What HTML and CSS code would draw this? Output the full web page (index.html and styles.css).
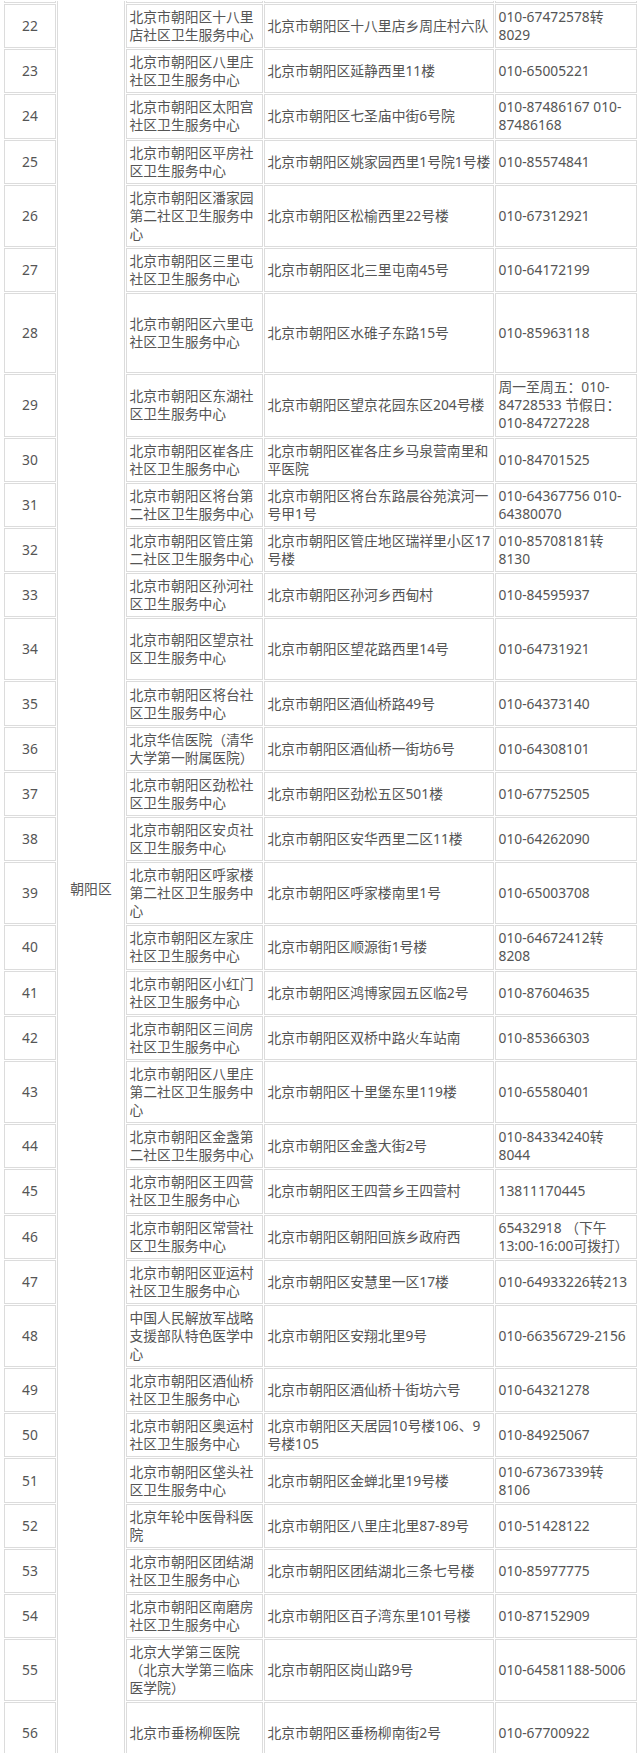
FILE: index.html
```html
<!DOCTYPE html>
<html lang="zh-CN">
<head>
<meta charset="utf-8">
<title>朝阳区社区卫生服务中心</title>
<link rel="stylesheet" href="styles.css">
</head>
<body>
<table class="list">
<colgroup>
<col class="c-no"><col class="c-dist"><col class="c-name"><col class="c-addr"><col class="c-tel">
</colgroup>
<tbody>
<tr class="edge-top"><td></td><td class="dist" rowspan="37">朝阳区</td><td></td><td></td><td></td></tr>
<tr><td class="no">22</td><td>北京市朝阳区十八里店社区卫生服务中心</td><td>北京市朝阳区十八里店乡周庄村六队</td><td>010-67472578转8029</td></tr>
<tr><td class="no">23</td><td>北京市朝阳区八里庄社区卫生服务中心</td><td>北京市朝阳区延静西里11楼</td><td>010-65005221</td></tr>
<tr><td class="no">24</td><td>北京市朝阳区太阳宫社区卫生服务中心</td><td>北京市朝阳区七圣庙中街6号院</td><td>010-87486167 010-<br>87486168</td></tr>
<tr><td class="no">25</td><td>北京市朝阳区平房社区卫生服务中心</td><td>北京市朝阳区姚家园西里1号院1号楼</td><td>010-85574841</td></tr>
<tr><td class="no">26</td><td>北京市朝阳区潘家园第二社区卫生服务中心</td><td>北京市朝阳区松榆西里22号楼</td><td>010-67312921</td></tr>
<tr><td class="no">27</td><td>北京市朝阳区三里屯社区卫生服务中心</td><td>北京市朝阳区北三里屯南45号</td><td>010-64172199</td></tr>
<tr class="r4"><td class="no">28</td><td>北京市朝阳区六里屯社区卫生服务中心</td><td>北京市朝阳区水碓子东路15号</td><td>010-85963118</td></tr>
<tr><td class="no">29</td><td>北京市朝阳区东湖社区卫生服务中心</td><td>北京市朝阳区望京花园东区204号楼</td><td>周一至周五：010-<br>84728533 节假日：<br>010-84727228</td></tr>
<tr><td class="no">30</td><td>北京市朝阳区崔各庄社区卫生服务中心</td><td>北京市朝阳区崔各庄乡马泉营南里和平医院</td><td>010-84701525</td></tr>
<tr><td class="no">31</td><td>北京市朝阳区将台第二社区卫生服务中心</td><td>北京市朝阳区将台东路晨谷苑滨河一号甲1号</td><td>010-64367756 010-<br>64380070</td></tr>
<tr><td class="no">32</td><td>北京市朝阳区管庄第二社区卫生服务中心</td><td>北京市朝阳区管庄地区瑞祥里小区17号楼</td><td>010-85708181转8130</td></tr>
<tr><td class="no">33</td><td>北京市朝阳区孙河社区卫生服务中心</td><td>北京市朝阳区孙河乡西甸村</td><td>010-84595937</td></tr>
<tr class="r3"><td class="no">34</td><td>北京市朝阳区望京社区卫生服务中心</td><td>北京市朝阳区望花路西里14号</td><td>010-64731921</td></tr>
<tr><td class="no">35</td><td>北京市朝阳区将台社区卫生服务中心</td><td>北京市朝阳区酒仙桥路49号</td><td>010-64373140</td></tr>
<tr><td class="no">36</td><td>北京华信医院（清华大学第一附属医院）</td><td>北京市朝阳区酒仙桥一街坊6号</td><td>010-64308101</td></tr>
<tr><td class="no">37</td><td>北京市朝阳区劲松社区卫生服务中心</td><td>北京市朝阳区劲松五区501楼</td><td>010-67752505</td></tr>
<tr><td class="no">38</td><td>北京市朝阳区安贞社区卫生服务中心</td><td>北京市朝阳区安华西里二区11楼</td><td>010-64262090</td></tr>
<tr><td class="no">39</td><td>北京市朝阳区呼家楼第二社区卫生服务中心</td><td>北京市朝阳区呼家楼南里1号</td><td>010-65003708</td></tr>
<tr><td class="no">40</td><td>北京市朝阳区左家庄社区卫生服务中心</td><td>北京市朝阳区顺源街1号楼</td><td>010-64672412转8208</td></tr>
<tr><td class="no">41</td><td>北京市朝阳区小红门社区卫生服务中心</td><td>北京市朝阳区鸿博家园五区临2号</td><td>010-87604635</td></tr>
<tr><td class="no">42</td><td>北京市朝阳区三间房社区卫生服务中心</td><td>北京市朝阳区双桥中路火车站南</td><td>010-85366303</td></tr>
<tr><td class="no">43</td><td>北京市朝阳区八里庄第二社区卫生服务中心</td><td>北京市朝阳区十里堡东里119楼</td><td>010-65580401</td></tr>
<tr><td class="no">44</td><td>北京市朝阳区金盏第二社区卫生服务中心</td><td>北京市朝阳区金盏大街2号</td><td>010-84334240转8044</td></tr>
<tr><td class="no">45</td><td>北京市朝阳区王四营社区卫生服务中心</td><td>北京市朝阳区王四营乡王四营村</td><td>13811170445</td></tr>
<tr><td class="no">46</td><td>北京市朝阳区常营社区卫生服务中心</td><td>北京市朝阳区朝阳回族乡政府西</td><td>65432918 （下午13:00-16:00可拨打）</td></tr>
<tr><td class="no">47</td><td>北京市朝阳区亚运村社区卫生服务中心</td><td>北京市朝阳区安慧里一区17楼</td><td>010-64933226转213</td></tr>
<tr><td class="no">48</td><td>中国人民解放军战略支援部队特色医学中心</td><td>北京市朝阳区安翔北里9号</td><td>010-66356729-2156</td></tr>
<tr><td class="no">49</td><td>北京市朝阳区酒仙桥社区卫生服务中心</td><td>北京市朝阳区酒仙桥十街坊六号</td><td>010-64321278</td></tr>
<tr><td class="no">50</td><td>北京市朝阳区奥运村社区卫生服务中心</td><td>北京市朝阳区天居园10号楼106、9号楼105</td><td>010-84925067</td></tr>
<tr><td class="no">51</td><td>北京市朝阳区垡头社区卫生服务中心</td><td>北京市朝阳区金蝉北里19号楼</td><td>010-67367339转8106</td></tr>
<tr><td class="no">52</td><td>北京年轮中医骨科医院</td><td>北京市朝阳区八里庄北里87-89号</td><td>010-51428122</td></tr>
<tr><td class="no">53</td><td>北京市朝阳区团结湖社区卫生服务中心</td><td>北京市朝阳区团结湖北三条七号楼</td><td>010-85977775</td></tr>
<tr><td class="no">54</td><td>北京市朝阳区南磨房社区卫生服务中心</td><td>北京市朝阳区百子湾东里101号楼</td><td>010-87152909</td></tr>
<tr><td class="no">55</td><td>北京大学第三医院（北京大学第三临床医学院）</td><td>北京市朝阳区岗山路9号</td><td>010-64581188-5006</td></tr>
<tr class="r3"><td class="no">56</td><td>北京市垂杨柳医院</td><td>北京市朝阳区垂杨柳南街2号</td><td>010-67700922</td></tr>
<tr class="edge-bottom"><td></td><td></td><td></td><td></td></tr>
</tbody>
</table>
</body>
</html>
```
FILE: styles.css
```css
html, body {
  margin: 0;
  padding: 0;
  background: #ffffff;
}

body {
  font-family: "Noto Sans", "Noto Sans CJK SC", sans-serif;
  font-size: 13.8px;
  line-height: 18px;
  color: #555555;
}

.list {
  table-layout: fixed;
  width: 635px;
  margin-left: 3px;
  border-collapse: separate;
  border-spacing: 1px;
}

.c-no { width: 52px; }
.c-dist { width: 68px; }
.c-name { width: 137px; }
.c-addr { width: 230px; }
.c-tel { width: 142px; }

.list td {
  box-sizing: border-box;
  border: 1px solid #dcdcdc;
  padding: 3.1px 2.5px;
  vertical-align: middle;
  text-align: left;
  word-break: normal;
}

.list td.no {
  text-align: center;
}

.list td.dist {
  text-align: center;
  border-top: none;
  border-bottom: none;
}

.r3 { height: 62.2px; }
.r4 { height: 80.2px; }

.edge-top { height: 2px; }
.edge-top td {
  padding: 0;
  border-top: none;
}

.edge-bottom { height: 11px; }
.edge-bottom td {
  padding: 0;
  border-bottom: none;
}
```
